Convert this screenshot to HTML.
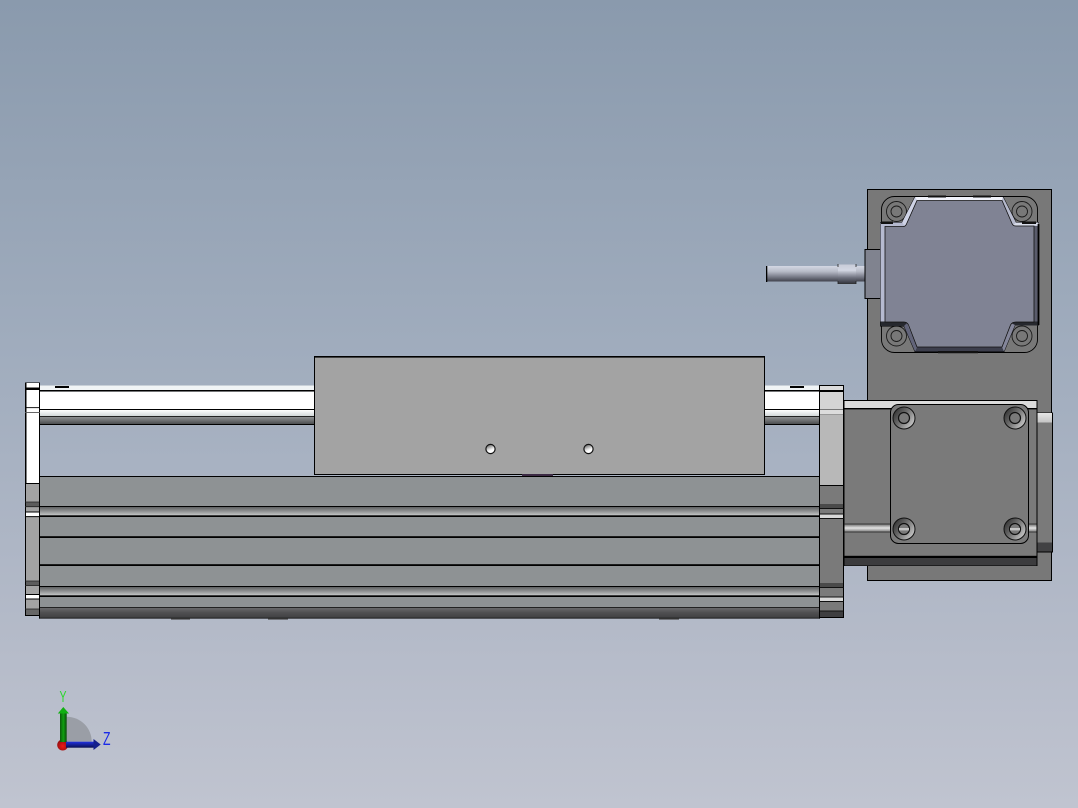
<!DOCTYPE html>
<html>
<head>
<meta charset="utf-8">
<title>Linear actuator model</title>
<style>
html,body{margin:0;padding:0;width:1078px;height:808px;overflow:hidden;background:#a3afc0}
svg{display:block}
text{font-family:"Liberation Sans",sans-serif}
</style>
</head>
<body>
<svg width="1078" height="808" viewBox="0 0 1078 808" xmlns="http://www.w3.org/2000/svg">
<defs>
<linearGradient id="bg" x1="0" y1="0" x2="0" y2="1">
<stop offset="0" stop-color="#8a9aad"/>
<stop offset=".45" stop-color="#a1adbe"/>
<stop offset=".8" stop-color="#b5bbc9"/>
<stop offset="1" stop-color="#c0c4d0"/>
</linearGradient>
<linearGradient id="g1" x1="0" y1="0" x2="0" y2="1">
<stop offset="0" stop-color="#5f6162"/>
<stop offset=".5" stop-color="#909293"/>
<stop offset="1" stop-color="#c6c8c8"/>
</linearGradient>
<linearGradient id="g2" x1="0" y1="0" x2="0" y2="1">
<stop offset="0" stop-color="#6c6c6e"/>
<stop offset=".5" stop-color="#505052"/>
<stop offset="1" stop-color="#414143"/>
</linearGradient>
<linearGradient id="rail" x1="0" y1="0" x2="0" y2="1">
<stop offset="0" stop-color="#ffffff"/>
<stop offset="1" stop-color="#d2d8da"/>
</linearGradient>
<linearGradient id="rail2" x1="0" y1="0" x2="0" y2="1">
<stop offset="0" stop-color="#8c8e90"/>
<stop offset=".5" stop-color="#6e7072"/>
<stop offset="1" stop-color="#4c4e50"/>
</linearGradient>
<linearGradient id="lt" x1="0" y1="0" x2="0" y2="1">
<stop offset="0" stop-color="#6a6a6a"/>
<stop offset=".5" stop-color="#e4e4e4"/>
<stop offset="1" stop-color="#777"/>
</linearGradient>
<linearGradient id="shaft" x1="0" y1="0" x2="0" y2="1">
<stop offset="0" stop-color="#d4d8e4"/>
<stop offset=".35" stop-color="#b8bcc8"/>
<stop offset=".7" stop-color="#787b88"/>
<stop offset="1" stop-color="#40424c"/>
</linearGradient>
<linearGradient id="shaft2" x1="0" y1="0" x2="0" y2="1">
<stop offset="0" stop-color="#c8ccd8"/>
<stop offset=".3" stop-color="#d4d8e4"/>
<stop offset=".7" stop-color="#6c6f7c"/>
<stop offset="1" stop-color="#34363e"/>
</linearGradient>
<linearGradient id="screw" x1="0" y1=".15" x2="1" y2=".85">
<stop offset="0" stop-color="#2c2c2c"/>
<stop offset=".45" stop-color="#6e6e6e"/>
<stop offset="1" stop-color="#d4d4d4"/>
</linearGradient>
<linearGradient id="screw2" x1=".2" y1="0" x2=".6" y2="1">
<stop offset="0" stop-color="#555"/>
<stop offset=".5" stop-color="#d8d8d8"/>
<stop offset=".7" stop-color="#ffffff"/>
<stop offset="1" stop-color="#ffffff"/>
</linearGradient>
<linearGradient id="blk" x1="0" y1="0" x2="0" y2="1">
<stop offset="0" stop-color="#e6e6e6"/>
<stop offset="1" stop-color="#c4c4c4"/>
</linearGradient>
<linearGradient id="gr" x1="0" y1="0" x2="1" y2="0">
<stop offset="0" stop-color="#0c5a0c"/>
<stop offset=".5" stop-color="#10a010"/>
<stop offset="1" stop-color="#0a4a0a"/>
</linearGradient>
<linearGradient id="bl" x1="0" y1="0" x2="0" y2="1">
<stop offset="0" stop-color="#2030e0"/>
<stop offset="1" stop-color="#0a1050"/>
</linearGradient>
<radialGradient id="red" cx=".5" cy=".6" r=".6">
<stop offset="0" stop-color="#f01818"/>
<stop offset="1" stop-color="#8a1010"/>
</radialGradient>
</defs>

<rect width="1078" height="808" fill="url(#bg)"/>

<!-- rear motor plate -->
<rect x="867.5" y="189.5" width="184" height="391" fill="#787878" stroke="#000" stroke-width="1"/>

<!-- shaft -->
<rect x="766.5" y="266" width="98" height="15.5" fill="url(#shaft)"/>
<rect x="766" y="266" width="1.3" height="16" fill="#000"/>
<rect x="838" y="264.5" width="18" height="19" fill="url(#shaft2)"/>
<path d="M838 264v3M856 264v3M838 281v3M856 281v3M838 283.5h18" stroke="#222" stroke-width=".8" fill="none"/>

<!-- connector -->
<rect x="865" y="249.5" width="16" height="49" fill="#80838f" stroke="#000" stroke-width="1"/>

<!-- motor flange -->
<rect x="881.5" y="196.5" width="156" height="156" rx="13" fill="#787878" stroke="#000" stroke-width=".9"/>
<g fill="none" stroke="#1a1a1a" stroke-width=".9">
<circle cx="896.5" cy="211.5" r="10"/><circle cx="896.5" cy="211.5" r="5.5"/>
<circle cx="1022" cy="211.5" r="10"/><circle cx="1022" cy="211.5" r="5.5"/>
<circle cx="896.5" cy="336" r="10"/><circle cx="896.5" cy="336" r="5.5"/>
<circle cx="1022" cy="336" r="10"/><circle cx="1022" cy="336" r="5.5"/>
</g>

<!-- motor body -->
<path d="M915 197H1003L1016 222.5H1038.5V325H1015L1004 351.5H915L904 326H880.5V222.5H902Z" fill="#b4b8cc" stroke="#000" stroke-width=".9"/>
<!-- strips -->
<path d="M915 197H1003L1002 200.5H917Z" fill="#f0f2fa"/>
<path d="M915 197L902 222.5 905 226.5 917 200.5Z" fill="#cfd3e6"/>
<path d="M1003 197L1016 222.5 1013 226 1002 200.5Z" fill="#b6bacd"/>
<path d="M880.5 222.5H902L905 226.5H885V325H880.5Z" fill="#b6bad0"/>
<path d="M1016 222.5H1038.5V225.5H1013Z" fill="#d8dcea"/>
<path d="M1034 226H1038.5V325H1034Z" fill="#5a5c6c"/>
<path d="M880.5 321.5H906L908 326H880.5Z" fill="#26282e"/>
<path d="M1012 321.5H1038.5V325.5H1012Z" fill="#26282e"/>
<path d="M907 323L917 347 915 351.5 904 326Z" fill="#62647a"/>
<path d="M1011 323L1002 347 1004 351.5 1015 325Z" fill="#84869a"/>
<path d="M917 347H1002L1004 351.5H915Z" fill="#3c3e4c"/>
<!-- inner face -->
<path d="M917 200.5H1002L1012 223.5Q1013 226 1016 226H1034V322H1016Q1012 322 1010.5 325L1002 347H917L908.5 325Q907 322 904 322H885V226.5H903Q905.5 226.5 906.5 224Z" fill="#808394" stroke="#111" stroke-width=".8"/>
<!-- dark accents -->
<path d="M928 195.5h18v2h-18zM973 195.5h18v2h-18zM938 351h40v2.2h-40z" fill="#111"/>
<path d="M881 221.5h12v2.5h-12zM1022 221.5h14v2.5h-14z" fill="#111"/>
<rect x="1037.6" y="224" width="1.8" height="101" fill="#000"/>

<!-- gearbox -->
<rect x="844" y="400.5" width="193" height="165" fill="#7a7a7a" stroke="#000" stroke-width="1"/>
<rect x="844.5" y="401" width="192" height="7" fill="#dcdcdc"/>
<rect x="844" y="408" width="193" height="1.4" fill="#000"/>
<rect x="844.5" y="524" width="192" height="8" fill="url(#lt)"/>
<path d="M844 524h193M844 532h193" stroke="#222" stroke-width=".8"/>
<rect x="844" y="555.8" width="193" height="2.2" fill="#000"/>
<rect x="844.5" y="558" width="192" height="7.5" fill="#3c3c3e"/>

<!-- right block -->
<rect x="1037" y="413" width="15.5" height="139" fill="#7a7a7a" stroke="#000" stroke-width="1"/>
<rect x="1037.5" y="413" width="14.5" height="9.5" fill="url(#blk)"/>
<rect x="1037.5" y="542.5" width="14.5" height="9" fill="#424244"/>

<!-- square plate -->
<rect x="890.5" y="404.5" width="138" height="139" rx="8" fill="#7a7a7a" stroke="#000" stroke-width="1"/>
<g stroke="#111" stroke-width="1">
<circle cx="904" cy="418" r="11" fill="url(#screw)"/><circle cx="904" cy="418" r="5.5" fill="#7a7a7a" stroke-width="1.2"/>
<circle cx="1015" cy="418" r="11" fill="url(#screw)"/><circle cx="1015" cy="418" r="5.5" fill="#7a7a7a" stroke-width="1.2"/>
<circle cx="904" cy="529" r="11" fill="url(#screw)"/><circle cx="904" cy="529" r="5.5" fill="#7a7a7a" stroke-width="1.2"/>
<circle cx="1015" cy="529" r="11" fill="url(#screw)"/><circle cx="1015" cy="529" r="5.5" fill="#7a7a7a" stroke-width="1.2"/>
</g>
<rect x="899" y="528" width="10" height="2.4" fill="#c4c4c4"/>
<rect x="1010" y="528" width="10" height="2.4" fill="#c4c4c4"/>

<!-- rail -->
<rect x="39.5" y="385" width="780" height="5" fill="#f0f4f6"/>
<rect x="39.5" y="385" width="780" height="1" fill="#c8d0d8"/>
<rect x="39.5" y="390" width="780" height="1.6" fill="#000"/>
<rect x="39.5" y="391.6" width="780" height="17.4" fill="#fff"/>
<rect x="39.5" y="409" width="780" height="1" fill="#000"/>
<rect x="39.5" y="410" width="780" height="6" fill="url(#rail)"/>
<rect x="39.5" y="416" width="780" height="1" fill="#222"/>
<rect x="39.5" y="417" width="780" height="7" fill="url(#rail2)"/>
<rect x="39.5" y="424" width="780" height="1" fill="#000"/>
<rect x="55" y="386" width="14" height="2" fill="#000"/>
<rect x="790" y="386" width="14" height="2" fill="#000"/>

<!-- left end cap -->
<rect x="25.5" y="383" width="14" height="232.5" fill="#a3a3a3" stroke="#000" stroke-width="1"/>
<rect x="26" y="383" width="13" height="100" fill="#fff"/>
<rect x="25.5" y="383" width="1" height="100" fill="#000"/>
<rect x="39" y="383" width="1" height="100" fill="#000"/>
<rect x="25" y="387.5" width="15" height="2.5" fill="#000"/>
<rect x="25" y="407.2" width="15" height=".9" fill="#000"/>
<rect x="25" y="412" width="15" height=".9" fill="#555"/>
<rect x="25" y="483" width="15" height="1" fill="#000"/>
<rect x="26" y="502" width="13" height="4.5" fill="#5c5c5c"/>
<path d="M25 502h15M25 506.7h15" stroke="#222" stroke-width=".8"/>
<rect x="26" y="512" width="13" height="4.5" fill="#fff"/>
<path d="M25 512h15M25 516.6h15" stroke="#000" stroke-width="1"/>
<rect x="26" y="581" width="13" height="4.5" fill="#5c5c5c"/>
<path d="M25 581h15M25 585.6h15" stroke="#222" stroke-width=".8"/>
<rect x="26" y="594.5" width="13" height="4.5" fill="#fff"/>
<path d="M25 594.5h15M25 599h15" stroke="#000" stroke-width="1"/>
<rect x="26" y="609" width="13" height="6" fill="#666"/>
<path d="M25 609h15" stroke="#222" stroke-width=".8"/>

<!-- right end cap -->
<rect x="819.5" y="385.5" width="24" height="232" fill="#7a7a7a" stroke="#000" stroke-width="1"/>
<rect x="820" y="386" width="23" height="4" fill="#dcdcdc"/>
<rect x="820" y="390" width="23" height="2" fill="#000"/>
<rect x="820" y="392" width="23" height="17" fill="#d4d4d4"/>
<rect x="820" y="409" width="23" height="1" fill="#777"/>
<rect x="820" y="410" width="23" height="4" fill="#dcdcdc"/>
<rect x="820" y="414" width="23" height="1" fill="#999"/>
<rect x="820" y="415" width="23" height="70" fill="#b8b8b8"/>
<rect x="819.5" y="485" width="24" height="1" fill="#000"/>
<rect x="820" y="504" width="23" height="4" fill="#4a4a4a"/>
<path d="M819.5 508.5h24M819.5 514h24M819.5 518.5h24" stroke="#111" stroke-width="1"/>
<rect x="820" y="514.5" width="23" height="3.5" fill="#d8d8d8"/>
<rect x="820" y="583" width="23" height="4" fill="#4a4a4a"/>
<path d="M819.5 587.5h24M819.5 597h24M819.5 601.5h24" stroke="#111" stroke-width="1"/>
<rect x="820" y="597.5" width="23" height="3.5" fill="#d8d8d8"/>
<rect x="820" y="611" width="23" height="6" fill="#3e3e40"/>
<path d="M819.5 611h24" stroke="#111" stroke-width="1"/>

<!-- main body -->
<rect x="39.5" y="476" width="780" height="142" fill="#8e9294"/>
<rect x="39" y="476" width="781" height="1" fill="#000"/>
<rect x="39.5" y="507" width="780" height="8.5" fill="url(#g1)"/>
<rect x="39" y="506" width="781" height="1" fill="#000"/>
<rect x="39" y="515.3" width="781" height="1.7" fill="#000"/>
<rect x="39" y="536.2" width="781" height="1.8" fill="#000"/>
<rect x="39" y="564.2" width="781" height="1.8" fill="#000"/>
<rect x="39.5" y="587" width="780" height="8.5" fill="url(#g1)"/>
<rect x="39" y="586" width="781" height="1" fill="#000"/>
<rect x="39" y="595.3" width="781" height="1.7" fill="#000"/>
<rect x="39.5" y="607.5" width="780" height="10" fill="url(#g2)"/>
<rect x="39" y="607" width="781" height="1" fill="#222"/>
<rect x="39" y="617.6" width="781" height="1" fill="#111"/>
<rect x="39" y="476" width="1" height="142.6" fill="#000"/>
<rect x="819" y="476" width="1" height="142.6" fill="#000"/>

<!-- under ticks -->
<g fill="#555">
<rect x="171" y="618.5" width="19" height="1.2"/>
<rect x="268" y="618.5" width="20" height="1.2"/>
<rect x="659" y="618.5" width="20" height="1.2"/>
</g>

<!-- carriage -->
<rect x="314.5" y="357" width="450" height="117.5" fill="#a3a3a3" stroke="#000" stroke-width="1"/>
<rect x="314" y="356" width="451" height="1.6" fill="#000"/>
<rect x="522" y="474" width="31" height="2" fill="#3c2a44"/>
<g stroke="#111" stroke-width="1.2">
<circle cx="490.5" cy="449" r="4.6" fill="url(#screw2)"/>
<circle cx="588.5" cy="449" r="4.6" fill="url(#screw2)"/>
</g>

<!-- triad -->
<path d="M66.7 716.7A25 25 0 0 1 91.7 741.7H66.7Z" fill="#9a9ea6"/>
<circle cx="62.7" cy="745" r="5.5" fill="url(#red)"/>
<rect x="60" y="713" width="6.7" height="29" fill="url(#gr)"/>
<path d="M63.3 707L57.8 713.5H69Z" fill="#12b012"/>
<rect x="66" y="741.7" width="28" height="6" fill="url(#bl)"/>
<path d="M100.7 744.5L93.5 739V750Z" fill="#14208c"/>
<text x="59.5" y="702" font-size="16" fill="#2ad82a" textLength="7" lengthAdjust="spacingAndGlyphs">Y</text>
<text x="103" y="745" font-size="18" fill="#1a2ae8" textLength="7.5" lengthAdjust="spacingAndGlyphs">Z</text>
</svg>
</body>
</html>
